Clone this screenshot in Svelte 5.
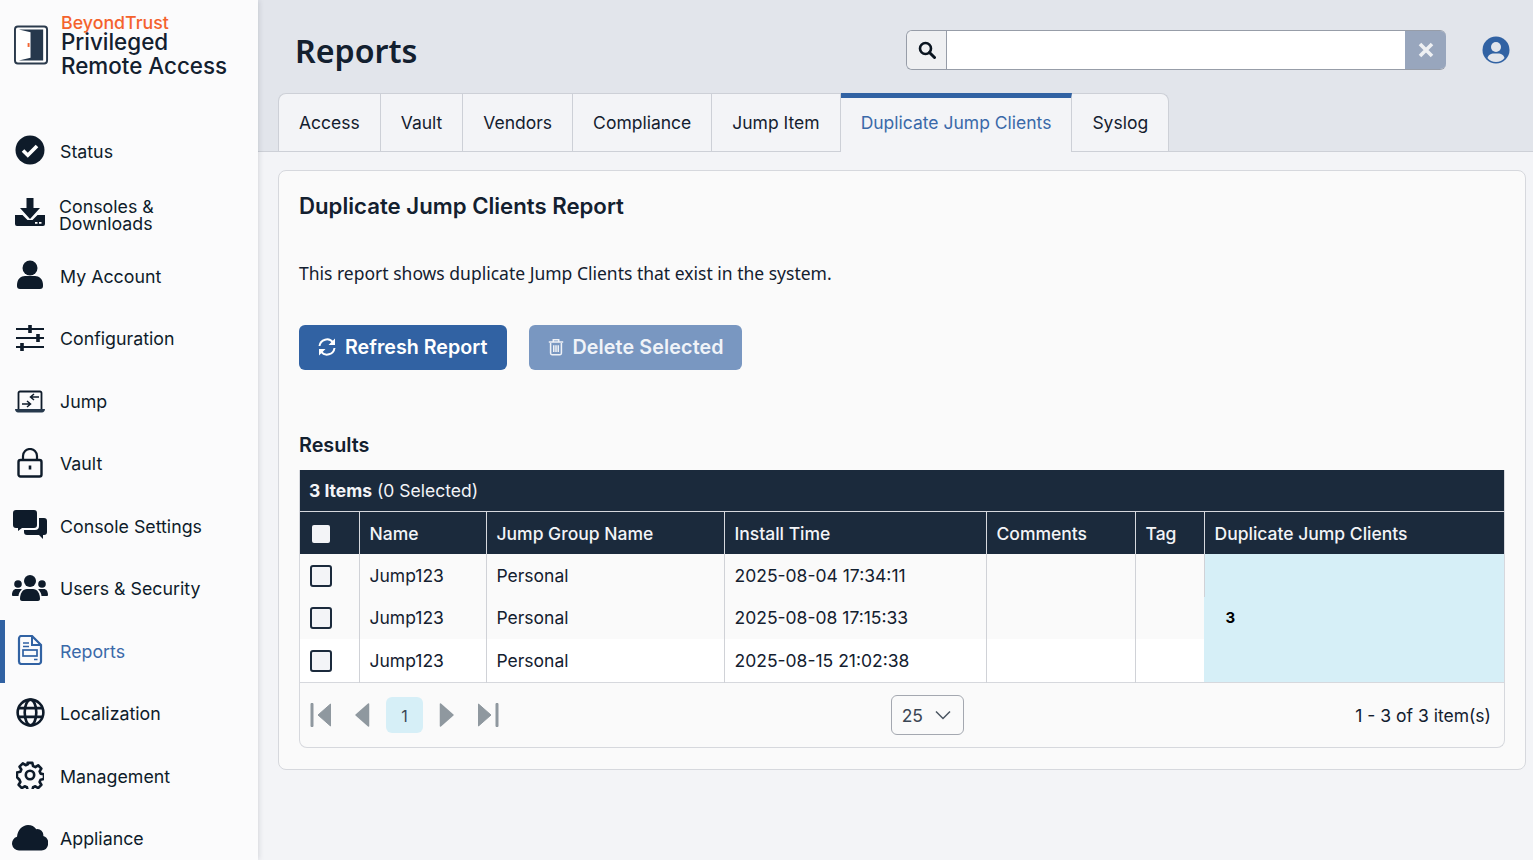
<script lang="ts">
  const nav = [
    { id: 'status', label: 'Status' },
    { id: 'downloads', label: 'Consoles &\nDownloads' },
    { id: 'account', label: 'My Account' },
    { id: 'config', label: 'Configuration' },
    { id: 'jump', label: 'Jump' },
    { id: 'vault', label: 'Vault' },
    { id: 'chat', label: 'Console Settings' },
    { id: 'users', label: 'Users & Security' },
    { id: 'reports', label: 'Reports' },
    { id: 'globe', label: 'Localization' },
    { id: 'gear', label: 'Management' },
    { id: 'cloud', label: 'Appliance' }
  ];
  const tabs = ['Access', 'Vault', 'Vendors', 'Compliance', 'Jump Item', 'Duplicate Jump Clients', 'Syslog'];
  const columns = ['Name', 'Jump Group Name', 'Install Time', 'Comments', 'Tag', 'Duplicate Jump Clients'];
  const rows = [
    { name: 'Jump123', group: 'Personal', time: '2025-08-04 17:34:11' },
    { name: 'Jump123', group: 'Personal', time: '2025-08-08 17:15:33' },
    { name: 'Jump123', group: 'Personal', time: '2025-08-15 21:02:38' }
  ];
</script>

<div class="page">
  <aside class="sidebar">
    <div class="brand">
      <svg class="logo" viewBox="0 0 36 40" width="35" height="40">
        <rect x="1" y="1" width="33" height="38" rx="3" fill="#fff" stroke="#2b3a4c" stroke-width="2"/>
        <path d="M5 4h25v32H5l12-3V7z" fill="#26384c"/>
        <rect x="14" y="18" width="2" height="4" fill="#f26531"/>
      </svg>
      <div class="brand-text">
        <span class="company">BeyondTrust</span>
        <span class="product">Privileged<br />Remote Access</span>
      </div>
    </div>
    <nav>
      {#each nav as item}
        <div class="nav-item" class:active={item.id === 'reports'}>
          <span class="nav-icon">
            {#if item.id === 'status'}
              <svg viewBox="0 0 30 30" width="30" height="30"><circle cx="15" cy="15" r="14.500" fill="#0e1b2a"/><path d="M8 15.500l4.800 4.800 9.200-9.400" fill="none" stroke="#fff" stroke-width="3.600"/></svg>
            {:else if item.id === 'downloads'}
              <svg viewBox="0 0 30 30" width="30" height="30"><path d="M11.500 0h7v10H25L15 21 5 10h6.500z" fill="#0e1b2a"/><path d="M0 17h7.500l5 5h5l5-5H30v9a2 2 0 0 1-2 2H2a2 2 0 0 1-2-2z" fill="#0e1b2a"/><path d="M20 24.800h2.500M24 24.800h2.500" stroke="#fff" stroke-width="1.800"/></svg>
            {:else if item.id === 'account'}
              <svg viewBox="0 0 30 30" width="30" height="30"><circle cx="15" cy="8" r="7.500" fill="#0e1b2a"/><path d="M2 25c0-6 4-9 8-9h10c4 0 8 3 8 9v1a3 3 0 0 1-3 3H5a3 3 0 0 1-3-3z" fill="#0e1b2a"/></svg>
            {:else if item.id === 'config'}
              <svg viewBox="0 0 30 30" width="30" height="30"><path d="M1 6h28M1 15h28M1 24h28" stroke="#0e1b2a" stroke-width="2.200"/><path d="M15 2v8M23 11v8M7 20v8" stroke="#0e1b2a" stroke-width="3.600"/></svg>
            {:else if item.id === 'jump'}
              <svg viewBox="0 0 30 30" width="30" height="30"><path d="M3.500 24V8a1.500 1.500 0 0 1 1.500-1.500h20A1.500 1.500 0 0 1 26.500 8v16" fill="none" stroke="#0e1b2a" stroke-width="1.800"/><path d="M0 24h30c0 2-1.500 3.500-3 3.500H3C1.500 27.500 0 26 0 24z" fill="#26384c"/><path d="M24 12h-8M19 9l-3.500 3 3.500 3M7 19h8M12 16l3.500 3-3.500 3" fill="none" stroke="#0e1b2a" stroke-width="1.500"/></svg>
            {:else if item.id === 'vault'}
              <svg viewBox="0 0 30 30" width="30" height="30"><rect x="3.500" y="12" width="23" height="16.500" rx="2" fill="none" stroke="#0e1b2a" stroke-width="2.400"/><path d="M8 12V8a7 7 0 0 1 14 0v4" fill="none" stroke="#0e1b2a" stroke-width="2.200"/><path d="M15 17.500v4" stroke="#0e1b2a" stroke-width="2.600"/></svg>
            {:else if item.id === 'chat'}
              <svg viewBox="0 0 34 30" width="34" height="30"><path d="M3 0h18a3 3 0 0 1 3 3v12a3 3 0 0 1-3 3H9l-4 3v-3H3a3 3 0 0 1-3-3V3a3 3 0 0 1 3-3z" fill="#0e1b2a"/><path d="M26 8h5a3 3 0 0 1 3 3v11a3 3 0 0 1-3 3h-1v4l-4-4H14a3 3 0 0 1-3-3v-2h11a4 4 0 0 0 4-4z" fill="#0e1b2a"/></svg>
            {:else if item.id === 'users'}
              <svg viewBox="0 0 36 26" width="36" height="26"><circle cx="18" cy="6" r="6" fill="#0e1b2a"/><circle cx="6" cy="9" r="3.800" fill="#0e1b2a"/><circle cx="30" cy="9" r="3.800" fill="#0e1b2a"/><path d="M8 24c0-6 3-10 7-10h6c4 0 7 4 7 10 0 1-1 2-2 2H10c-1 0-2-1-2-2z" fill="#0e1b2a"/><path d="M0 20c0-4 2-6 4-6h4c1 0 2 .5 2 .5C8 16 6.500 18.500 6.500 21H1c-.5 0-1-.5-1-1zM36 20c0-4-2-6-4-6h-4c-1 0-2 .5-2 .5 2 1.500 3.500 4 3.500 6.500H35c.5 0 1-.5 1-1z" fill="#0e1b2a"/></svg>
            {:else if item.id === 'reports'}
              <svg viewBox="0 0 30 30" width="30" height="30"><path d="M17 1H6.500A2.500 2.500 0 0 0 4 3.500v23A2.500 2.500 0 0 0 6.500 29h17a2.500 2.500 0 0 0 2.500-2.500V10z" fill="none" stroke="#3162a3" stroke-width="2.200"/><path d="M17 1v9h9" fill="none" stroke="#3162a3" stroke-width="2"/><path d="M8 8h6M8 11.500h6M19 24.500h3.500" stroke="#3162a3" stroke-width="1.700"/><rect x="8" y="15" width="14" height="6" fill="none" stroke="#3162a3" stroke-width="1.700"/></svg>
            {:else if item.id === 'globe'}
              <svg viewBox="0 0 30 30" width="29" height="29"><g fill="none" stroke="#0e1b2a" stroke-width="2.700"><circle cx="15" cy="15" r="13.300"/><ellipse cx="15" cy="15" rx="6" ry="13.300"/><path d="M3 10.500h24M3 19.500h24"/></g></svg>
            {:else if item.id === 'gear'}
              <svg viewBox="0 0 30 30" width="28" height="28"><path d="M12.500 2h5l.8 3.500 2.400 1 3-1.900 3.500 3.500-1.900 3 1 2.400 3.700.8v5l-3.700.8-1 2.400 1.900 3-3.500 3.500-3-1.900-2.400 1-.8 3.700h-5l-.8-3.700-2.400-1-3 1.900-3.500-3.500 1.900-3-1-2.400L1 17.300v-5l3.700-.8 1-2.400-1.900-3 3.500-3.500 3 1.900 2.400-1z" fill="none" stroke="#0e1b2a" stroke-width="2.800" stroke-linejoin="round"/><circle cx="15" cy="15" r="4.500" fill="none" stroke="#0e1b2a" stroke-width="2.800"/></svg>
            {:else if item.id === 'cloud'}
              <svg viewBox="0 0 36 26" width="36" height="26"><path d="M7 25.500a7 7 0 0 1-2-13.700C5.500 5 10.500 0 16 0c3.500 0 6.500 1.500 8.300 4.200a6 6 0 0 1 7 6.800 7.500 7.500 0 0 1-1.800 14.500z" fill="#0e1b2a"/></svg>
            {/if}
          </span>
          <span class="nav-label">{item.label}</span>
        </div>
      {/each}
    </nav>
  </aside>

  <main>
    <header class="topbar">
      <h1>Reports</h1>
      <div class="search">
        <span class="search-icon">
          <svg viewBox="0 0 18 18" width="18" height="18"><circle cx="7.500" cy="7.500" r="5.500" fill="none" stroke="#0a1520" stroke-width="2.600"/><path d="M11.500 11.500l5 5" stroke="#0a1520" stroke-width="3" stroke-linecap="round"/></svg>
        </span>
        <span class="search-input"></span>
        <span class="search-clear">
          <svg viewBox="0 0 16 16" width="16" height="16"><path d="M2 2l12 12M14 2L2 14" stroke="#eef0f3" stroke-width="3.600"/></svg>
        </span>
      </div>
      <svg class="user" viewBox="0 0 28 28" width="28" height="28">
        <circle cx="14" cy="14" r="13.500" fill="#3162a3"/>
        <circle cx="14" cy="11" r="5" fill="#e2e5eb"/>
        <path d="M5.500 22c1-3.500 4-4.500 6-4.500h5c2 0 5 1 6 4.500-2 2.500-5 4-8.500 4s-6.500-1.500-8.500-4z" fill="#e2e5eb"/>
      </svg>
    </header>

    <div class="tabs">
      {#each tabs as tab}
        <div class="tab" class:current={tab === 'Duplicate Jump Clients'}>{tab}</div>
      {/each}
    </div>

    <section class="card">
      <h2>Duplicate Jump Clients Report</h2>
      <p class="intro">This report shows duplicate Jump Clients that exist in the system.</p>
      <div class="actions">
        <button class="primary">
          <svg viewBox="0 0 20 20" width="20" height="20"><g fill="none" stroke="#fff" stroke-width="2"><path d="M2.500 9a7.500 7.500 0 0 1 13.500-3.500"/><path d="M17.500 11a7.500 7.500 0 0 1-13.500 3.500"/></g><path d="M18 1.500V8h-6.500zM2 18.500V12h6.500z" fill="#fff"/></svg>
          Refresh Report
        </button>
        <button class="disabled">
          <svg viewBox="0 0 20 20" width="18" height="20"><g fill="none" stroke="#eef1f6" stroke-width="1.700"><path d="M4 5.500V17a1.500 1.500 0 0 0 1.500 1.500h9A1.500 1.500 0 0 0 16 17V5.500"/><path d="M2 4.500h16M7 4V2h6v2M7.500 8v7.500M10 8v7.500M12.500 8v7.500"/></g></svg>
          Delete Selected
        </button>
      </div>

      <h3>Results</h3>
      <div class="grid">
        <div class="grid-title"><b>3 Items</b> (0 Selected)</div>
        <table>
          <colgroup>
            <col style="width: 59px" /><col style="width: 127px" /><col style="width: 238px" /><col style="width: 262px" /><col style="width: 149px" /><col style="width: 69px" /><col />
          </colgroup>
          <thead>
            <tr>
              <th class="check"><span class="box head"></span></th>
              {#each columns as col}
                <th>{col}</th>
              {/each}
            </tr>
          </thead>
          <tbody>
            {#each rows as row, i}
              <tr class:plain={i === 2}>
                <td class="check"><span class="box"></span></td>
                <td>{row.name}</td>
                <td>{row.group}</td>
                <td>{row.time}</td>
                <td></td>
                <td></td>
                {#if i === 0}
                  <td class="merged" rowspan="3"><b>3</b></td>
                {/if}
              </tr>
            {/each}
          </tbody>
        </table>
        <div class="pager">
          <div class="pages">
            <svg viewBox="0 0 22 26" width="22" height="26"><path d="M1 1.500h2v23H1zM20.500 2v22L8 13z" fill="#8f989f" stroke="#8f989f" stroke-width="1" stroke-linejoin="round"/></svg>
            <svg class="prev" viewBox="0 0 16 26" width="16" height="26"><path d="M14.500 2v22L2 13z" fill="#8f989f" stroke="#8f989f" stroke-width="1.500" stroke-linejoin="round"/></svg>
            <span class="page-num">1</span>
            <svg class="next" viewBox="0 0 16 26" width="16" height="26"><path d="M1.500 2v22L14 13z" fill="#8f989f" stroke="#8f989f" stroke-width="1.500" stroke-linejoin="round"/></svg>
            <svg viewBox="0 0 22 26" width="22" height="26"><path d="M19 1.500h2v23h-2zM1.500 2v22L14 13z" fill="#8f989f" stroke="#8f989f" stroke-width="1" stroke-linejoin="round"/></svg>
          </div>
          <div class="size">
            25
            <svg viewBox="0 0 16 10" width="16" height="10"><path d="M1 1.500l7 7 7-7" fill="none" stroke="#4a5561" stroke-width="1.500"/></svg>
          </div>
          <div class="count">1 - 3 of 3 item(s)</div>
        </div>
      </div>
    </section>
  </main>
</div>

<style>
  :global(body) {
    margin: 0;
    background: #f3f4f7;
    font-family: Inter, "Liberation Sans", sans-serif;
    color: #0e1b2a;
  }
  .page { display: flex; height: 860px; width: 1533px; overflow: hidden; }

  .sidebar {
    width: 258px;
    flex: none;
    background: #fbfbfc;
    box-shadow: 0 0 6px rgba(20, 30, 50, .18);
    position: relative;
    z-index: 1;
  }
  .brand { display: flex; gap: 13px; height: 120px; box-sizing: border-box; padding: 13px 0 0 14px; }
  .logo { margin-top: 12px; }
  .brand-text { display: flex; flex-direction: column; margin-left: -1px; }
  .company { color: #f4622d; font-size: 17.800px; line-height: 19px; font-weight: 500; }
  .product { font-size: 22.400px; line-height: 23.500px; font-weight: 500; color: #13202f; margin-top: -2px; }

  .nav-item { height: 62.500px; display: flex; align-items: center; font-size: 17.800px; color: #0e1b2a; }
  .nav-icon { width: 60px; display: flex; justify-content: center; flex: none; margin-top: -2px; }
  .nav-label { white-space: pre-line; line-height: 17px; }
  .nav-item:nth-child(2) .nav-label { margin: 2px 0 0 -1px; }
  .nav-item.active { color: #3a69a9; box-shadow: inset 5px 0 0 #3162a3; }

  main { flex: 1; min-width: 0; display: flex; flex-direction: column; }
  .topbar {
    height: 93px;
    background: #e2e5eb;
    display: flex;
    align-items: center;
    box-sizing: border-box;
    padding: 0 23px 0 37px;
  }
  h1 { margin: 0; font: 600 32.200px "Noto Sans", sans-serif; color: #13202f; flex: 1; padding-top: 8px; }
  .search {
    width: 540px;
    height: 40px;
    display: flex;
    box-sizing: border-box;
    border-radius: 6px;
    overflow: hidden;
    margin: 7px 37px 0 0;
    border: 1px solid #979da8;
    border-right: 0;
  }
  .search-icon { width: 39px; background: #eff0f2; border-right: 1px solid #979da8; display: flex; align-items: center; justify-content: center; }
  .search-input { flex: 1; background: #fff; }
  .search-clear { width: 41px; background: #98a6bd; display: flex; align-items: center; justify-content: center; }
  .user { margin: 6px 0 0 -1px; }

  .tabs {
    background: #e2e5eb;
    display: flex;
    padding-left: 20px;
    border-bottom: 1px solid #cdd0d7;
    height: 59px;
    box-sizing: border-box;
  }
  .tab {
    padding: 0 20px;
    font-size: 17.500px;
    background: #f3f4f7;
    display: flex;
    align-items: center;
    border: 1px solid #cdd0d7;
    border-left: 0;
    border-bottom: 0;
    color: #13202f;
  }
  .tab:first-child { border-left: 1px solid #cdd0d7; border-top-left-radius: 8px; }
  .tab:last-child { border-top-right-radius: 8px; }
  .tab.current {
    color: #3a69a9;
    border-top: 5px solid #3162a3;
    padding-bottom: 5px;
    height: 59px;
    box-sizing: border-box;
  }

  .card {
    margin: 18px 7px 0 20px;
    height: 600px;
    box-sizing: border-box;
    background: #fafafa;
    border: 1px solid #d6d8dd;
    border-radius: 8px;
    padding: 0 20px;
  }
  h2 { margin: 21px 0 0; font-size: 22.200px; line-height: 28px; font-weight: 600; color: #13202f; }
  .intro { margin: 41px 0 0; font: 400 17.500px/24px "Noto Sans", sans-serif; color: #13202f; }
  .actions { display: flex; gap: 22px; margin-top: 40px; }
  button {
    height: 45px;
    border: 0;
    border-radius: 6px;
    font: 600 19.700px Inter, sans-serif;
    color: #fff;
    display: flex;
    align-items: center;
    gap: 8px;
    padding: 0 20px 2px 18px;
  }
  .primary { background: #3162a3; }
  .disabled { background: #7997c1; color: #f0f3f8; gap: 7px; padding-right: 18px; letter-spacing: .13px; }
  h3 { margin: 63px 0 0; font-size: 19.800px; line-height: 24px; font-weight: 600; color: #13202f; }

  .grid { margin-top: 13px; border: 1px solid #d6d8dd; border-top: 0; border-radius: 0 0 8px 8px; }
  .grid-title {
    height: 41px;
    line-height: 41px;
    background: #1b2a3c;
    color: #f3f4f7;
    font-size: 17.500px;
    padding-left: 9px;
  }
  .grid-title b { font-weight: 700; }
  table { width: 100%; border-collapse: collapse; table-layout: fixed; font-size: 17.500px; border-top: 1px solid #d6d8dd; }
  th {
    height: 42px;
    background: #1b2a3c;
    color: #f3f4f7;
    font-weight: 500;
    text-align: left;
    padding: 2px 10px 0;
    border-left: 1px solid #d6d8dd;
    box-sizing: border-box;
  }
  th:first-child, td:first-child { border-left: 0; }
  td {
    height: 43px;
    padding: 0 10px;
    background: #fafafa;
    border-left: 1px solid #d0d2d7;
    box-sizing: border-box;
    color: #13202f;
  }
  tbody tr:nth-child(2) td:not(.merged) { height: 42px; }
  tr.plain td { background: #fff; height: 44px; }
  td.merged { background: #d6eff7; border-left: 0; padding-left: 21px; font-size: 15px; color: #000; }
  tbody tr:first-child td:nth-child(6) { border-right: 1px solid #d0d2d7; }
  tbody { border-bottom: 1px solid #d6d8dd; }
  .check { padding: 0 0 0 10px; }
  th.check { padding: 0 0 0 12px; }
  .box { display: inline-block; width: 22px; height: 22px; box-sizing: border-box; border: 2px solid #1b2a3c; border-radius: 3px; background: #f3f4f7; vertical-align: middle; }
  .box.head { width: 18px; height: 18px; border: 0; border-radius: 2px; }

  .pager { height: 64px; display: flex; justify-content: space-between; align-items: center; padding: 0 13px 0 10px; }
  .pages { display: flex; align-items: center; }
  .prev { margin-left: 22px; }
  .page-num {
    width: 37px;
    height: 36px;
    line-height: 38px;
    text-align: center;
    background: #d6eff7;
    border-radius: 6px;
    font-size: 16px;
    color: #3b4654;
    margin: 0 16px;
  }
  .next { margin-right: 22px; }
  .size {
    width: 73px;
    height: 40px;
    box-sizing: border-box;
    border: 1px solid #a4a8b0;
    border-radius: 6px;
    display: flex;
    align-items: center;
    justify-content: space-between;
    padding: 0 12px 0 10px;
    font-size: 17.500px;
    color: #3b4654;
  }
  .count { font-size: 17.500px; color: #13202f; padding-top: 1px; }
</style>
